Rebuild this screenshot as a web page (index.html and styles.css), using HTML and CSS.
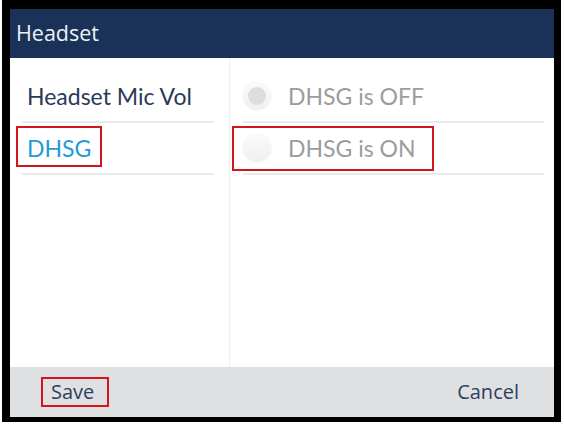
FILE: index.html
```html
<!DOCTYPE html>
<html lang="en">
<head>
  <meta charset="UTF-8">
  <title>Headset</title>
  <link rel="stylesheet" href="styles.css">
</head>
<body>
<div class="frame">
  <div class="title">Headset</div>
  <div class="content">
    <ul class="menu">
      <li>Headset Mic Vol</li>
      <li class="active"><span class="mark mark-menu"></span>DHSG</li>
    </ul>
    <ul class="options">
      <li><span class="radio checked"></span>DHSG is OFF</li>
      <li><span class="mark mark-option"></span><span class="radio"></span>DHSG is ON</li>
    </ul>
  </div>
  <div class="footer">
    <span class="btn save">Save<span class="mark mark-save"></span></span>
    <span class="btn">Cancel</span>
  </div>
</div>
</body>
</html>
```

FILE: styles.css
```css
* {
  margin: 0;
  padding: 0;
  box-sizing: border-box;
}

ul {
  list-style: none
}

body {
  background: #fff;
}

.frame {
  width: 559px;
  height: 422px;
  margin-left: 2px;
  border-style: solid;
  border-color: #000;
  border-width: 9px 7px 5px 8px;
  display: flex;
  flex-direction: column;
  background: #fff;
}

.title {
  height: 49px;
  background-color: #1a3158;
  color: #eef2f7;
  font-family: "Open Sans", sans-serif;
  font-size: 21.5px;
  line-height: 47px;
  padding-left: 6px;
}

.content {
  flex: 1;
  display: flex;
}

.menu {
  width: 220px;
  border-right: 1px solid #eceef0;
  padding: 13px 15px 0 12px;
}

.options {
  flex: 1;
  padding: 13px 10px 0 13px;
}

.menu li,
.options li {
  position: relative;
  height: 52px;
  border-bottom: 2px solid #e9ecef;
  display: flex;
  align-items: center;
  font-family: Lato, sans-serif;
  font-size: 23px;
}

.menu li {
  padding-left: 5px;
  color: #2b3a55;
}

.menu li.active {
  color: #1f9bd8;
}

.options li {
  color: #9c9c9c;
}

.radio {
  width: 28px;
  height: 28px;
  border-radius: 50%;
  margin-right: 17px;
  background: linear-gradient(#fafafa, #eef0f2);
  box-shadow: 0 0 2px #e4e6e8;
  display: flex;
  align-items: center;
  justify-content: center;
}

.radio.checked::after {
  content: "";
  width: 18px;
  height: 18px;
  border-radius: 50%;
  background: #dcdddf;
}

.footer {
  height: 50px;
  background-color: #dfe0e2;
  display: flex;
  justify-content: space-between;
  align-items: center;
  padding: 0 35px 0 31px;
  font-family: "Open Sans", sans-serif;
  font-size: 20px;
  color: #2d3f5c;
}

.btn {
  line-height: 30px;
}

.btn.save {
  position: relative;
  padding-left: 10px;
}

/* red annotation boxes */
.mark {
  position: absolute;
  border: 2px solid #d2141c;
}

.mark-menu {
  left: -6px;
  top: 3px;
  width: 86px;
  height: 41px;
}

.mark-option {
  left: -11px;
  top: 3px;
  width: 202px;
  height: 45px;
}

.mark-save {
  left: 0;
  top: 0;
  width: 68px;
  height: 30px;
}
```
